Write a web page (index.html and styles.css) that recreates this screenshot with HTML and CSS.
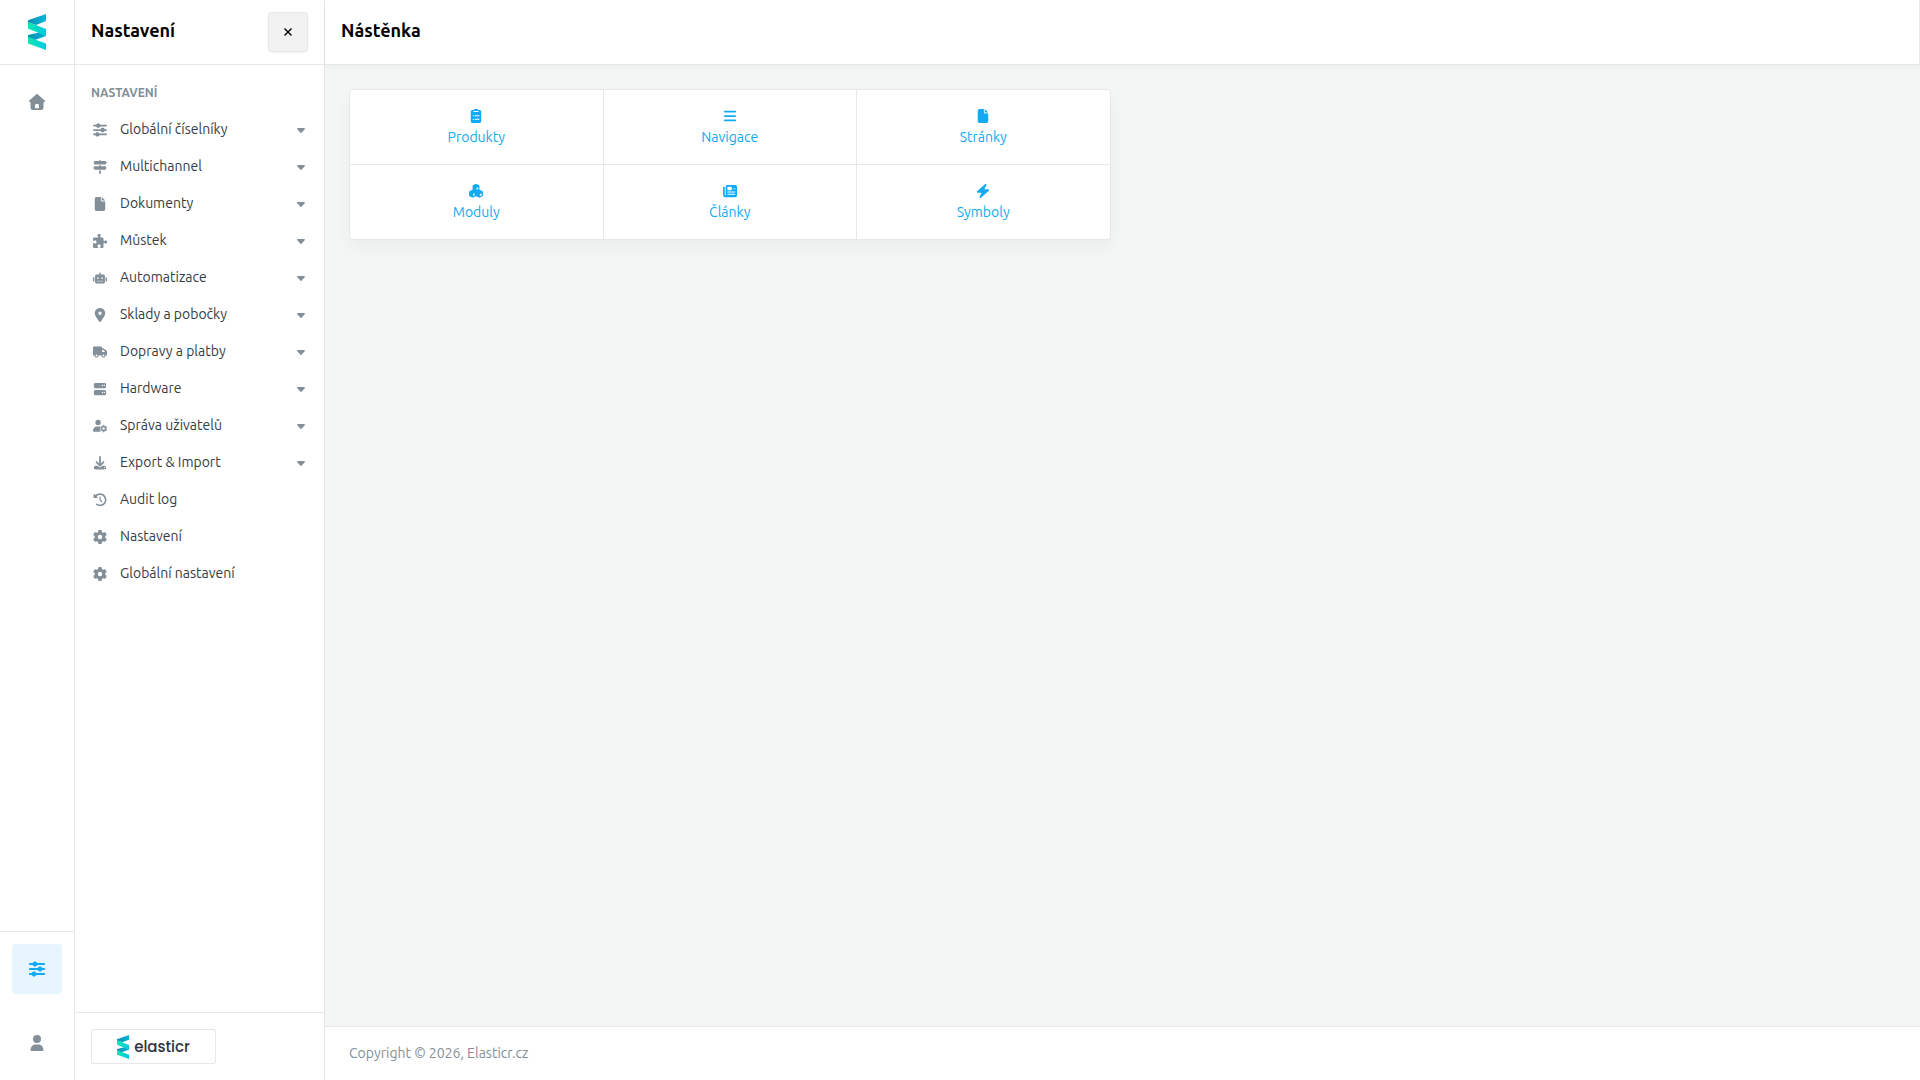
FILE: index.html
```html
<!DOCTYPE html>
<html lang="cs">
<head>
<meta charset="utf-8">
<meta name="viewport" content="width=device-width, initial-scale=1">
<title>Nástěnka</title>
<link rel="stylesheet" href="styles.css">
</head>
<body>
<svg class="sprite" aria-hidden="true">
  <defs>
    <linearGradient id="band-dark" x1="0" y1="0" x2="1" y2="0"><stop offset="0" stop-color="#0a8fae"/><stop offset="1" stop-color="#09b4dc"/></linearGradient>
    <linearGradient id="band-light" x1="0" y1="0" x2="1" y2="0"><stop offset="0" stop-color="#07e8ae"/><stop offset="1" stop-color="#05c8e6"/></linearGradient>
  </defs>
  <symbol id="logo" viewBox="0 0 18 36">
    <path fill="url(#band-dark)" d="M18 0v7L8 11 0 8.200V6.200zM18 17v5L7 26 0 23.200V21z"/>
    <path fill="url(#band-light)" d="M0 8l18 7v7L0 14.500zM0 23l18 6.500V36L0 29.500z"/>
  </symbol>
  <symbol id="sliders" viewBox="0 0 512 512"><path d="M0 96c0-18 14-32 32-32h86c12-28 40-48 74-48s61 20 73 48h215c18 0 32 14 32 32s-14 32-32 32H265c-12 28-40 48-73 48s-62-20-74-48H32c-18 0-32-14-32-32zm0 160c0-18 14-32 32-32h246c13-28 41-48 74-48s61 20 73 48h55c18 0 32 14 32 32s-14 32-32 32h-55c-12 28-40 48-73 48s-61-20-74-48H32c-18 0-32-14-32-32zm0 160c0-18 14-32 32-32h54c13-28 41-48 74-48s61 20 73 48h247c18 0 32 14 32 32s-14 32-32 32H233c-12 28-40 48-73 48s-61-20-74-48H32c-18 0-32-14-32-32z"/></symbol>
  <symbol id="signs" viewBox="0 0 512 512"><path d="M224 32H64c-18 0-32 14-32 32v64c0 18 14 32 32 32h378c4 0 8-2 11-5l48-48c6-6 6-16 0-22l-48-48c-3-3-7-5-11-5H288c0-18-14-32-32-32s-32 14-32 32zm256 224c0-18-14-32-32-32H288v-32h-64v32H71c-5 0-9 2-12 5l-48 48c-6 6-6 16 0 22l48 48c3 3 7 5 12 5h377c18 0 32-14 32-32zM288 480v-96h-64v96c0 18 14 32 32 32s32-14 32-32z"/></symbol>
  <symbol id="file" viewBox="0 0 384 512"><path d="M0 64C0 29 29 0 64 0h160v128c0 18 14 32 32 32h128v288c0 35-29 64-64 64H64c-35 0-64-29-64-64zm384 64H256V0z"/></symbol>
  <symbol id="puzzle" viewBox="0 0 512 512"><path d="M192 104.800c0-9.200-5.800-17.300-13.200-22.800C167.200 73.300 160 61.300 160 48c0-26.500 28.700-48 64-48s64 21.500 64 48c0 13.300-7.200 25.300-18.800 34-7.400 5.500-13.200 13.600-13.200 22.800 0 12.800 10.400 23.200 23.200 23.200H336c26.500 0 48 21.500 48 48v56.800c0 12.800 10.400 23.200 23.200 23.200 9.200 0 17.300-5.800 22.800-13.200 8.700-11.600 20.700-18.800 34-18.800 26.500 0 48 28.700 48 64s-21.500 64-48 64c-13.300 0-25.300-7.200-34-18.800-5.500-7.400-13.600-13.200-22.800-13.200-12.800 0-23.200 10.400-23.200 23.200V464c0 26.500-21.500 48-48 48h-56.800c-12.800 0-23.200-10.400-23.200-23.200 0-9.200 5.800-17.300 13.200-22.800 11.600-8.700 18.800-20.700 18.800-34 0-26.500-28.700-48-64-48s-64 21.500-64 48c0 13.300 7.200 25.300 18.800 34 7.400 5.500 13.200 13.600 13.200 22.800 0 12.800-10.400 23.200-23.200 23.200H48c-26.500 0-48-21.500-48-48V343.200C0 330.400 10.400 320 23.200 320c9.200 0 17.300 5.800 22.800 13.200C54.700 344.800 66.700 352 80 352c26.500 0 48-28.700 48-64s-21.500-64-48-64c-13.300 0-25.300 7.200-34 18.800C40.500 250.200 32.400 256 23.200 256 10.400 256 0 245.600 0 232.800V176c0-26.500 21.500-48 48-48h120.800c12.800 0 23.200-10.400 23.200-23.200z"/></symbol>
  <symbol id="robot" viewBox="0 0 640 512"><path fill-rule="evenodd" d="M320 0c17.700 0 32 14.300 32 32v64h120c39.800 0 72 32.200 72 72v272c0 39.800-32.200 72-72 72H168c-39.800 0-72-32.200-72-72V168c0-39.800 32.200-72 72-72h120V32c0-17.700 14.300-32 32-32zM208 384c-9 0-16 7-16 16s7 16 16 16h32c9 0 16-7 16-16s-7-16-16-16zm96 0c-9 0-16 7-16 16s7 16 16 16h32c9 0 16-7 16-16s-7-16-16-16zm96 0c-9 0-16 7-16 16s7 16 16 16h32c9 0 16-7 16-16s-7-16-16-16zM264 256a40 40 0 1 0-80 0 40 40 0 1 0 80 0zm152 40a40 40 0 1 0 0-80 40 40 0 1 0 0 80zM48 224h16v192H48c-26.500 0-48-21.500-48-48v-96c0-26.500 21.500-48 48-48zm544 0c26.500 0 48 21.500 48 48v96c0 26.500-21.500 48-48 48h-16V224z"/></symbol>
  <symbol id="pin" viewBox="0 0 384 512"><path fill-rule="evenodd" d="M215.700 499.200C267 435 384 279.400 384 192 384 86 298 0 192 0S0 86 0 192c0 87.400 117 243 168.300 307.200 12.300 15.300 35.100 15.300 47.400 0zM192 128a64 64 0 1 1 0 128 64 64 0 1 1 0-128z"/></symbol>
  <symbol id="truck" viewBox="0 0 640 512"><path fill-rule="evenodd" d="M48 0C21.500 0 0 21.500 0 48v320c0 26.500 21.500 48 48 48h16c0 53 43 96 96 96s96-43 96-96h128c0 53 43 96 96 96s96-43 96-96h32c17.700 0 32-14.300 32-32V237.300c0-17-6.700-33.300-18.700-45.300L512 114.700c-12-12-28.300-18.700-45.300-18.700H416V48c0-26.500-21.500-48-48-48zm368 160h50.700l77.300 77.300V256H416zM112 416a48 48 0 1 1 96 0 48 48 0 1 1-96 0zm368-48a48 48 0 1 1 0 96 48 48 0 1 1 0-96z"/></symbol>
  <symbol id="server" viewBox="0 0 512 512"><path fill-rule="evenodd" d="M80 32c-27 0-48 29-48 64v64c0 35 21 64 48 64h352c27 0 48-29 48-64V96c0-35-21-64-48-64zm264 72a24 24 0 1 1 0 48 24 24 0 1 1 0-48zm48 24a24 24 0 1 1 48 0 24 24 0 1 1-48 0zM80 288c-27 0-48 29-48 64v64c0 35 21 64 48 64h352c27 0 48-29 48-64v-64c0-35-21-64-48-64zm264 72a24 24 0 1 1 0 48 24 24 0 1 1 0-48zm48 24a24 24 0 1 1 48 0 24 24 0 1 1-48 0z"/></symbol>
  <symbol id="user-gear" viewBox="0 0 576 512"><path fill-rule="evenodd" d="M208 0a112 112 0 1 1 0 224 112 112 0 1 1 0-224zm-40 280h90c11 0 22 1 32 3-9 29-5 55 10 75-18 18-23 45-15 70 6 22 18 42 34 60H30c-17 0-30-13-30-30 0-98 70-178 168-178zm236-68h64l10 44 28 16 42-13 31 53-32 31v34l32 31-31 53-42-13-28 16-10 44h-64l-10-44-28-16-42 13-31-53 32-31v-34l-32-31 31-53 42 13 28-16zm32 96a52 52 0 1 0 0 104 52 52 0 1 0 0-104z"/></symbol>
  <symbol id="download" viewBox="0 0 512 512"><path fill-rule="evenodd" d="M288 32c0-17.700-14.300-32-32-32s-32 14.300-32 32v242.700l-73.400-73.400c-12.500-12.500-32.800-12.500-45.300 0s-12.500 32.800 0 45.300l128 128c12.500 12.500 32.800 12.500 45.300 0l128-128c12.500-12.500 12.500-32.800 0-45.300s-32.800-12.500-45.300 0L288 274.700zM96 352c-35.300 0-64 28.700-64 64v16c0 35.300 28.700 64 64 64h320c35.300 0 64-28.700 64-64v-16c0-35.300-28.700-64-64-64h-69.500l-45.300 45.300c-25 25-65.500 25-90.500 0L165.500 352zm320 48a24 24 0 1 1 0 48 24 24 0 1 1 0-48z"/></symbol>
  <symbol id="history" viewBox="-20 -10 552 552"><path d="M75 75L41 41C26 26 0 36.900 0 58.100V168c0 13.300 10.700 24 24 24h110.100c21.400 0 32.100-25.900 17-41l-30.800-30.800C155 85.500 203 64 256 64c106 0 192 86 192 192s-86 192-192 192c-40.800 0-78.600-12.700-109.700-34.400-14.500-10.100-34.400-6.600-44.600 7.900s-6.600 34.400 7.900 44.600C151.200 495 201.700 512 256 512c141.400 0 256-114.600 256-256S397.400 0 256 0C185.300 0 121.300 28.700 75 75zm181 53c-13.300 0-24 10.700-24 24v104c0 6.400 2.500 12.500 7 17l72 72c9.400 9.400 24.600 9.400 33.900 0s9.400-24.600 0-33.900l-65-65V152c0-13.300-10.700-24-24-24z"/></symbol>
  <symbol id="gear" viewBox="0 0 512 512"><path fill-rule="evenodd" d="M495.900 166.600c3.200 8.700.5 18.400-6.400 24.600l-43.300 39.400c1.100 8.300 1.700 16.800 1.700 25.400s-.6 17.100-1.700 25.400l43.300 39.400c6.900 6.200 9.600 15.900 6.400 24.600-4.400 11.900-9.700 23.300-15.800 34.300l-4.700 8.100c-6.600 11-14 21.400-22.100 31.200-5.900 7.200-15.700 9.600-24.500 6.800l-55.700-17.700c-13.400 10.300-28.200 18.900-44 25.400l-12.500 57.100c-2 9.100-9 16.300-18.200 17.800-13.800 2.300-28 3.500-42.500 3.500s-28.700-1.200-42.500-3.500c-9.200-1.500-16.200-8.700-18.200-17.800l-12.500-57.100c-15.800-6.500-30.600-15.100-44-25.400l-55.600 17.800c-8.800 2.800-18.600.3-24.500-6.800-8.100-9.800-15.500-20.200-22.100-31.200l-4.700-8.100c-6.100-11-11.400-22.400-15.800-34.300-3.200-8.700-.5-18.400 6.400-24.600l43.300-39.400C64.600 273.100 64 264.600 64 256s.6-17.100 1.700-25.400l-43.300-39.400c-6.900-6.200-9.600-15.900-6.400-24.600 4.400-11.900 9.700-23.300 15.800-34.300l4.700-8.100c6.600-11 14-21.400 22.100-31.200 5.900-7.200 15.700-9.600 24.500-6.800l55.700 17.700c13.400-10.300 28.200-18.900 44-25.400l12.500-57.100c2-9.100 9-16.300 18.200-17.800C227.300 1.200 241.500 0 256 0s28.700 1.200 42.500 3.500c9.200 1.500 16.200 8.700 18.200 17.800l12.500 57.100c15.800 6.500 30.600 15.100 44 25.400l55.700-17.700c8.800-2.800 18.600-.3 24.500 6.800 8.100 9.800 15.500 20.200 22.100 31.200l4.700 8.100c6.100 11 11.400 22.400 15.800 34.300zM256 336a80 80 0 1 0 0-160 80 80 0 1 0 0 160z"/></symbol>
  <symbol id="home" viewBox="0 0 512 512"><path fill-rule="evenodd" d="M236 7c12-10 28-10 40 0l226 204c20 18 10 53-19 53h-19v168c0 44-28 80-72 80H120c-44 0-72-36-72-80V264H29c-29 0-39-35-19-53zM192 432c0 13 8 24 20 24h88c12 0 20-11 20-24v-56c0-36-28-64-64-64s-64 28-64 64z"/></symbol>
  <symbol id="user" viewBox="0 0 448 512"><path d="M224 0a128 128 0 1 1 0 256 128 128 0 1 1 0-256zm-46 304h92c98 0 160 80 160 178 0 17-13 30-30 30H48c-17 0-30-13-30-30 0-98 62-178 160-178z"/></symbol>
  <symbol id="caret" viewBox="0 0 8 5"><path d="M.8 0h6.400c.7 0 1 .8.500 1.300L4.500 4.700a.7.7 0 0 1-1 0L.3 1.300C-.2.800.1 0 .8 0z"/></symbol>
  <symbol id="clipboard" viewBox="0 0 384 512"><path fill-rule="evenodd" d="M192 0c-42 0-77 10-91 32H64c-35 0-64 29-64 64v352c0 35 29 64 64 64h256c35 0 64-29 64-64V96c0-35-29-64-64-64h-37c-14-22-49-32-91-32zm-80 72h160c9 0 16 7 16 16v8c0 9-7 16-16 16H112c-9 0-16-7-16-16v-8c0-9 7-16 16-16zM72 248a24 24 0 1 1 48 0 24 24 0 1 1-48 0zm88-20h144c9 0 16 8 16 20s-7 20-16 20H160c-9 0-16-8-16-20s7-20 16-20zM72 376a24 24 0 1 1 48 0 24 24 0 1 1-48 0zm88-20h144c9 0 16 8 16 20s-7 20-16 20H160c-9 0-16-8-16-20s7-20 16-20z"/></symbol>
  <symbol id="bars" viewBox="0 0 448 512"><path d="M0 96c0-18 14-32 32-32h384c18 0 32 14 32 32s-14 32-32 32H32c-18 0-32-14-32-32zm0 160c0-18 14-32 32-32h384c18 0 32 14 32 32s-14 32-32 32H32c-18 0-32-14-32-32zm0 160c0-18 14-32 32-32h384c18 0 32 14 32 32s-14 32-32 32H32c-18 0-32-14-32-32z"/></symbol>
  <symbol id="cubes" viewBox="0 0 576 576"><path fill-rule="evenodd" d="M268 4c13-5 27-5 40 0l92 38c18 8 30 24 30 43v148l100 44c27 10 46 30 46 59v118c0 19-11 37-28 46l-98 60c-14 7-30 7-44 0l-118-60-118 60c-14 7-30 7-44 0l-98-60C11 491 0 473 0 454V336c0-29 19-49 46-59l100-44V85c0-19 12-35 30-43zm42 232l66-32v-74l-66 30zM168 496l62-34v-78l-62 30zm280 0l70-36v-76l-70 32z"/></symbol>
  <symbol id="news" viewBox="0 0 512 512"><path fill-rule="evenodd" d="M96 96c0-35 29-64 64-64h288c35 0 64 29 64 64v320c0 35-29 64-64 64H80c-44 0-80-36-80-80V128c0-18 14-32 32-32s32 14 32 32v272c0 9 7 16 16 16s16-7 16-16zm64 24v80c0 13 11 24 24 24h112c13 0 24-11 24-24v-80c0-13-11-24-24-24H184c-13 0-24 11-24 24zm208 40v32h80v-32zM160 272v36h288v-36zm0 88v36h288v-36z"/></symbol>
  <symbol id="bolt" viewBox="0 0 448 512"><path d="M349 45c6-14 1-30-11-39s-29-8-40 2L11 264c-10 9-14 23-9 35s17 21 30 21h143L99 467c-6 14-1 30 11 39s29 8 40-2l287-256c10-9 14-23 9-35s-17-21-30-21H273z"/></symbol>
</svg>

<div class="app">
  <nav class="rail" aria-label="Hlavní navigace">
    <a class="rail-logo" href="#" aria-label="Elasticr"><svg class="logo"><use href="#logo"/></svg></a>
    <div class="rail-main">
      <a class="rail-item" href="#" aria-label="Domů"><svg class="icon-lg"><use href="#home"/></svg></a>
    </div>
    <div class="rail-bottom">
      <a class="rail-item active" href="#" aria-label="Nastavení"><svg class="icon-lg"><use href="#sliders"/></svg></a>
      <a class="rail-item" href="#" aria-label="Uživatel"><svg class="icon-lg"><use href="#user"/></svg></a>
    </div>
  </nav>

  <aside class="sidebar">
    <header class="sidebar-head">
      <h2 class="title">Nastavení</h2>
      <button class="close" type="button" aria-label="Zavřít"><svg class="cross" viewBox="0 0 8 8"><path d="M.5.5l7 7M7.500.5l-7 7"/></svg></button>
    </header>
    <nav class="menu" aria-label="Nastavení">
      <h3 class="menu-label">NASTAVENÍ</h3>
      <a class="menu-item" href="#"><svg class="icon"><use href="#sliders"/></svg><span>Globální číselníky</span><svg class="caret"><use href="#caret"/></svg></a>
      <a class="menu-item" href="#"><svg class="icon"><use href="#signs"/></svg><span>Multichannel</span><svg class="caret"><use href="#caret"/></svg></a>
      <a class="menu-item" href="#"><svg class="icon"><use href="#file"/></svg><span>Dokumenty</span><svg class="caret"><use href="#caret"/></svg></a>
      <a class="menu-item" href="#"><svg class="icon"><use href="#puzzle"/></svg><span>Můstek</span><svg class="caret"><use href="#caret"/></svg></a>
      <a class="menu-item" href="#"><svg class="icon"><use href="#robot"/></svg><span>Automatizace</span><svg class="caret"><use href="#caret"/></svg></a>
      <a class="menu-item" href="#"><svg class="icon"><use href="#pin"/></svg><span>Sklady a pobočky</span><svg class="caret"><use href="#caret"/></svg></a>
      <a class="menu-item" href="#"><svg class="icon"><use href="#truck"/></svg><span>Dopravy a platby</span><svg class="caret"><use href="#caret"/></svg></a>
      <a class="menu-item" href="#"><svg class="icon"><use href="#server"/></svg><span>Hardware</span><svg class="caret"><use href="#caret"/></svg></a>
      <a class="menu-item" href="#"><svg class="icon"><use href="#user-gear"/></svg><span>Správa uživatelů</span><svg class="caret"><use href="#caret"/></svg></a>
      <a class="menu-item" href="#"><svg class="icon"><use href="#download"/></svg><span>Export &amp; Import</span><svg class="caret"><use href="#caret"/></svg></a>
      <a class="menu-item" href="#"><svg class="icon"><use href="#history"/></svg><span>Audit log</span></a>
      <a class="menu-item" href="#"><svg class="icon"><use href="#gear"/></svg><span>Nastavení</span></a>
      <a class="menu-item" href="#"><svg class="icon"><use href="#gear"/></svg><span>Globální nastavení</span></a>
    </nav>
    <footer class="sidebar-foot">
      <a class="brand" href="#"><svg class="brand-mark"><use href="#logo"/></svg><span>elasticr</span></a>
    </footer>
  </aside>

  <div class="page">
    <header class="page-head"><h1 class="title">Nástěnka</h1></header>
    <main class="content">
      <div class="tiles">
        <a class="tile" href="#"><svg class="icon"><use href="#clipboard"/></svg><span>Produkty</span></a>
        <a class="tile" href="#"><svg class="icon"><use href="#bars"/></svg><span>Navigace</span></a>
        <a class="tile" href="#"><svg class="icon"><use href="#file"/></svg><span>Stránky</span></a>
        <a class="tile" href="#"><svg class="icon"><use href="#cubes"/></svg><span>Moduly</span></a>
        <a class="tile" href="#"><svg class="icon"><use href="#news"/></svg><span>Články</span></a>
        <a class="tile" href="#"><svg class="icon"><use href="#bolt"/></svg><span>Symboly</span></a>
      </div>
    </main>
    <footer class="page-foot">Copyright © 2026, Elasticr.cz</footer>
  </div>
</div>
</body>
</html>
```
FILE: styles.css
```css
:root {
  --line: #e6e7e9;
  --muted: #828f99;
  --text: #353b42;
  --blue: #10aaf5;
}
* { box-sizing: border-box; }
body {
  margin: 0;
  background: #f4f6f5;
  color: var(--text);
  font-family: Ubuntu, "Noto Sans", sans-serif;
  font-size: 14px;
  line-height: 20px;
}
a { color: inherit; text-decoration: none; }
svg { display: block; flex: none; fill: currentColor; }
.sprite { position: absolute; width: 0; height: 0; }
.icon { width: 14px; height: 14px; }
.icon-lg { width: 16px; height: 16px; }

.app {
  display: grid;
  grid-template-columns: 75px 250px 1fr;
  min-height: 100vh;
}
.title {
  margin: 0;
  padding-bottom: 4px;
  color: #000;
  font-size: 18px;
  font-weight: 600;
  line-height: 24px;
}

.rail {
  display: flex;
  flex-direction: column;
  background: #fff;
  border-right: 1px solid var(--line);
  color: var(--muted);
}
.rail-logo {
  display: flex;
  align-items: center;
  justify-content: center;
  height: 65px;
  border-bottom: 1px solid var(--line);
}
.logo { width: 18px; height: 36px; }
.rail-main { flex: 1; padding: 12px; }
.rail-bottom {
  display: grid;
  gap: 24px;
  padding: 12px;
  border-top: 1px solid var(--line);
}
.rail-item {
  display: flex;
  align-items: center;
  justify-content: center;
  height: 50px;
  border-radius: 4px;
}
.rail-item.active { background: #e7f5ff; color: var(--blue); }

.sidebar {
  display: flex;
  flex-direction: column;
  background: #fff;
  border-right: 1px solid var(--line);
}
.sidebar-head {
  display: flex;
  align-items: center;
  justify-content: space-between;
  height: 65px;
  padding: 0 16px;
  border-bottom: 1px solid var(--line);
}
.close {
  display: flex;
  align-items: center;
  justify-content: center;
  width: 40px;
  height: 40px;
  padding: 0;
  background: #f2f2f2;
  border: 1px solid var(--line);
  border-radius: 4px;
  box-shadow: 0 1px 2px rgba(0, 0, 0, .05);
  color: #000;
}
.cross { width: 8px; height: 8px; stroke: currentColor; stroke-width: 1.4; }
.menu { flex: 1; padding: 18px 19px 18px 16px; }
.menu-label {
  margin: 0 0 8px;
  color: var(--muted);
  font-size: 12px;
  font-weight: 600;
  line-height: 20px;
}
.menu-item {
  display: grid;
  grid-template-columns: 18px 1fr 8px;
  column-gap: 11px;
  align-items: center;
  height: 37px;
}
.menu-item span { padding-bottom: 2px; }
.menu-item .icon { justify-self: center; color: var(--muted); }
.caret { width: 8px; height: 5px; margin-top: 2px; color: var(--muted); }
.sidebar-foot { padding: 16px; border-top: 1px solid var(--line); }
.brand {
  display: flex;
  align-items: center;
  justify-content: center;
  gap: 5px;
  width: 125px;
  height: 35px;
  border: 1px solid var(--line);
  border-radius: 2px;
  color: #30343f;
  font-family: Poppins, Inter, sans-serif;
  font-size: 15px;
  font-weight: 500;
}
.brand-mark { width: 12px; height: 24px; }

.page { display: flex; flex-direction: column; min-width: 0; }
.page-head {
  display: flex;
  align-items: center;
  height: 65px;
  padding: 0 16px;
  background: #fff;
  border: solid var(--line);
  border-width: 0 1px 1px 0;
  box-shadow: 0 2px 4px rgba(0, 0, 0, .04);
}
.content {
  flex: 1;
  display: grid;
  grid-template-columns: 1fr 1fr;
  gap: 24px;
  align-items: start;
  padding: 24px;
}
.tiles {
  display: grid;
  grid-template-columns: repeat(3, 1fr);
  gap: 1px;
  background: var(--line);
  border: 1px solid var(--line);
  border-radius: 4px;
  box-shadow: 0 8px 16px rgba(0, 0, 0, .04);
  overflow: hidden;
}
.tile {
  display: flex;
  flex-direction: column;
  align-items: center;
  gap: 4px;
  padding: 19px 16px 17px;
  background: #fff;
  color: var(--blue);
}
.page-foot {
  padding: 16px 24px 17px;
  background: #fff;
  border-top: 1px solid var(--line);
  color: var(--muted);
}
```
